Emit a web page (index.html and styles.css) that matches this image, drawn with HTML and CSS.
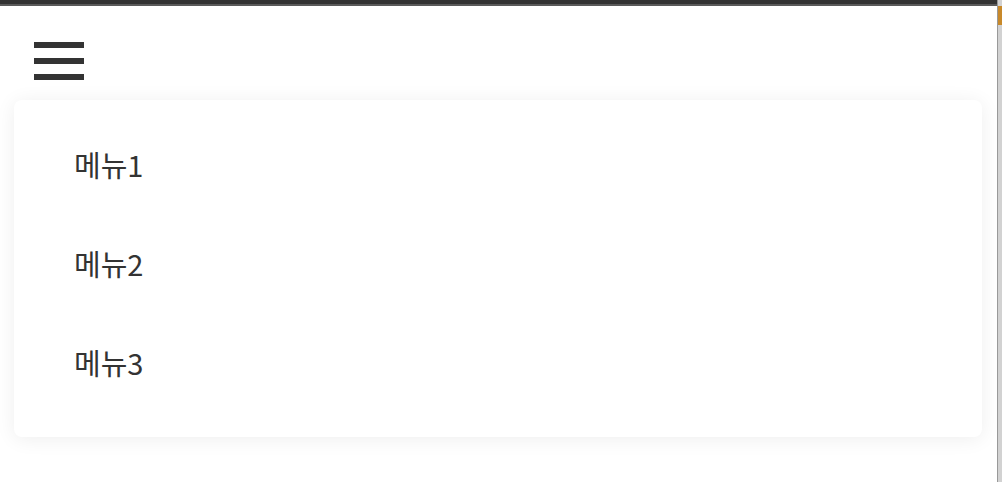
FILE: index.html
```html
<!DOCTYPE html>
<html lang="ko">
<head>
    <meta charset="UTF-8">
    <meta name="viewport" content="width=device-width, initial-scale=1.0">
    <title>메뉴</title>
    <link rel="stylesheet" href="styles.css">
</head>
<body>
<div class="page">
    <div class="main">
        <div class="topbar"></div>
        <div class="header">
            <div class="hamburger">
                <span></span>
                <span></span>
                <span></span>
            </div>
        </div>
        <!-- 드롭다운 메뉴 -->
        <ul class="menu">
            <li>메뉴1</li>
            <li>메뉴2</li>
            <li>메뉴3</li>
        </ul>
    </div>
    <div class="side">
        <div class="side-thumb"></div>
    </div>
</div>
</body>
</html>
```

FILE: styles.css
```css
body {
    margin: 0;
    font-family: "Noto Sans CJK KR", "Noto Sans", sans-serif;
    background-color: #fff;
    color: #333;
}

.page {
    display: flex;
    height: 482px;
    overflow: hidden;
}

.main {
    flex: 1;
    min-width: 0;
}

.topbar {
    height: 4px;
    background-color: #333;
    border-bottom: 2px solid #5a5a5a;
}

.header {
    padding: 36px 0 0 34px;
    box-sizing: border-box;
    height: 94px;
}

.hamburger {
    width: 50px;
    display: flex;
    flex-direction: column;
    gap: 10px;
    cursor: pointer;
}

.hamburger span {
    display: block;
    height: 6px;
    background-color: #333;
}

.menu {
    list-style: none;
    margin: 0 15px 0 14px;
    padding: 15px 0 25px;
    background: #fff;
    border-radius: 8px;
    box-shadow: 0 2px 20px rgba(0, 0, 0, 0.07);
}

.menu li {
    height: 99px;
    line-height: 99px;
    padding-left: 60px;
    font-size: 29px;
    cursor: pointer;
}

.side {
    width: 4px;
    border-left: 1px solid #999;
    background-color: #d2d2d2;
    padding-top: 6px;
}

.side-thumb {
    height: 19px;
    background-color: #c8892a;
}
```
